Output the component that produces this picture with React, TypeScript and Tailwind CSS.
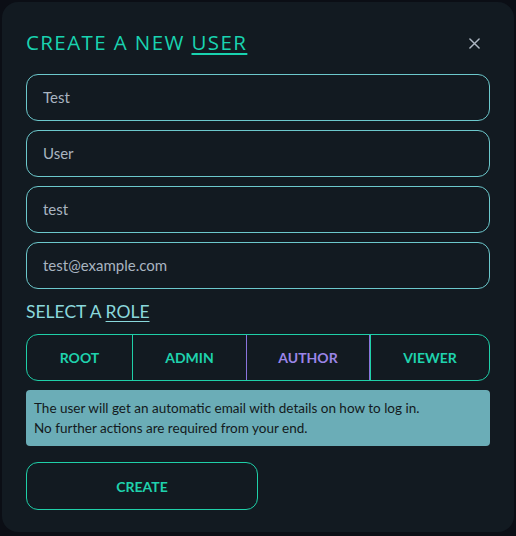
import React from "react";

const roles = [
  { name: "ROOT", w: "w-[105px]", active: false },
  { name: "ADMIN", w: "w-[114px]", active: false },
  { name: "AUTHOR", w: "w-[124px]", active: true },
  { name: "VIEWER", w: "flex-1", active: false },
];

const fields = ["Test", "User", "test", "test@example.com"];

export default function App() {
  return (
    <div className="w-[516px] h-[536px] bg-[#0b0e15] p-[2px] pb-[4px]" style={{ fontFamily: "Lato, 'Noto Sans', sans-serif" }}>
      <div className="h-full rounded-[16px] bg-[#121a21] px-[24px] pt-[26px]">
        <div className="flex items-center justify-between h-[28px]">
          <h1 className="text-[20.5px] leading-[28px] text-[#19d3b0] tracking-[1.4px]" style={{ fontFamily: "'Open Sans', sans-serif" }}>
            CREATE A NEW <span className="underline underline-offset-[3px] decoration-[1.5px]">USER</span>
          </h1>
          <button className="w-[24px] h-[24px] flex items-center justify-center mr-[4px] mt-[2px]">
            <svg width="11" height="11" viewBox="0 0 12 12" fill="none" stroke="#aeb7c3" strokeWidth="1.6" strokeLinecap="round">
              <path d="M1 1L11 11M11 1L1 11" />
            </svg>
          </button>
        </div>
        <div className="mt-[18px] flex flex-col gap-[9px]">
          {fields.map((f) => (
            <div key={f} className="h-[47px] rounded-[12px] border border-[#6cc8cc] flex items-center px-[16px] text-[15px] text-[#a9b4c0]">
              {f}
            </div>
          ))}
        </div>
        <div className="mt-[11px] text-[17.5px] leading-[24px] text-[#8ad8dc]">
          SELECT A <span className="underline underline-offset-[3px] decoration-[1px]">ROLE</span>
        </div>
        <div className="mt-[10px] h-[47px] rounded-[12px] border border-[#1fcfa8] flex overflow-hidden">
          {roles.map((r, i) => (
            <div
              key={r.name}
              className={`${r.w} flex items-center justify-center text-[14px] font-bold ${i > 0 ? "border-l" : ""} ${r.active ? "text-[#9b85e8] border border-[#8a73dc] -my-px" : "text-[#1fd2ad] border-[#1fcfa8]"}`}
            >
              {r.name}
            </div>
          ))}
        </div>
        <div className="mt-[9px] rounded-[4px] bg-[#6badb7] px-[8px] py-[8px] text-[13.5px] leading-[20px] text-[#131a20]">
          <div>The user will get an automatic email with details on how to log in.</div>
          <div>No further actions are required from your end.</div>
        </div>
        <button className="mt-[16px] w-[232px] h-[48px] rounded-[12px] border border-[#1fcfa8] text-[14px] font-bold text-[#1fd2ad]">
          CREATE
        </button>
      </div>
    </div>
  );
}
